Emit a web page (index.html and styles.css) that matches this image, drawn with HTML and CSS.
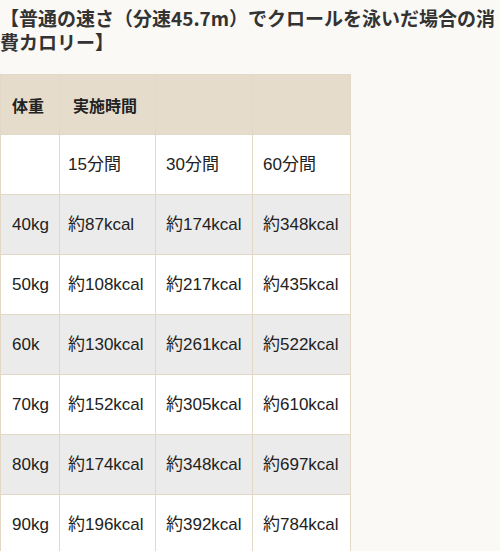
FILE: index.html
```html
<!DOCTYPE html>
<html lang="ja">
<head>
<meta charset="utf-8">
<link rel="stylesheet" href="styles.css">
</head>
<body>
<div class="page">
  <h3 class="title">【普通の速さ（分速45.7m）でクロールを泳いだ場合の消費カロリー】</h3>
  <table class="kcal">
    <tr class="head">
      <th>体重</th><th>実施時間</th><th></th><th></th>
    </tr>
    <tr class="odd"><td></td><td>15分間</td><td>30分間</td><td>60分間</td></tr>
    <tr class="even"><td>40kg</td><td>約87kcal</td><td>約174kcal</td><td>約348kcal</td></tr>
    <tr class="odd"><td>50kg</td><td>約108kcal</td><td>約217kcal</td><td>約435kcal</td></tr>
    <tr class="even"><td>60k</td><td>約130kcal</td><td>約261kcal</td><td>約522kcal</td></tr>
    <tr class="odd"><td>70kg</td><td>約152kcal</td><td>約305kcal</td><td>約610kcal</td></tr>
    <tr class="even"><td>80kg</td><td>約174kcal</td><td>約348kcal</td><td>約697kcal</td></tr>
    <tr class="odd"><td>90kg</td><td>約196kcal</td><td>約392kcal</td><td>約784kcal</td></tr>
  </table>
</div>
</body>
</html>
```

FILE: styles.css
```css
html, body {
  margin: 0;
  padding: 0;
  background: #faf9f6;
}
.page {
  padding: 6px 0 0 0;
  font-family: "Liberation Sans", "Noto Sans CJK JP", sans-serif;
  color: #333;
}
.title {
  margin: 0 0 20px 0;
  font-family: "Noto Sans CJK JP", sans-serif;
  font-size: 19px;
  font-weight: bold;
  line-height: 24px;
  color: #333;
}
.kcal {
  border-collapse: collapse;
  font-size: 17px;
  line-height: 20px;
  color: #222;
}
.kcal th, .kcal td {
  border: 1px solid #e3d8c5;
  height: 60px;
  padding: 0 8px;
  vertical-align: middle;
  text-align: left;
  box-sizing: border-box;
  white-space: nowrap;
}
.kcal th:nth-child(1), .kcal td:nth-child(1) { width: 59px; padding-left: 11px; padding-right: 0; }
.kcal th:nth-child(2), .kcal td:nth-child(2) { width: 96px; }
.kcal th:nth-child(3), .kcal td:nth-child(3) { width: 97px; }
.kcal th:nth-child(4), .kcal td:nth-child(4) { width: 98px; }
.kcal th {
  background: #e6dccb;
  font-weight: bold;
  color: #222;
  font-family: "Noto Sans CJK JP", sans-serif;
  font-size: 16px;
}
.kcal th:nth-child(n+2) { padding-left: 13px; }
.kcal td:nth-child(n+3) { padding-left: 10px; }
.odd td { background: #ffffff; }
.even td { background: #ebebeb; }
```
